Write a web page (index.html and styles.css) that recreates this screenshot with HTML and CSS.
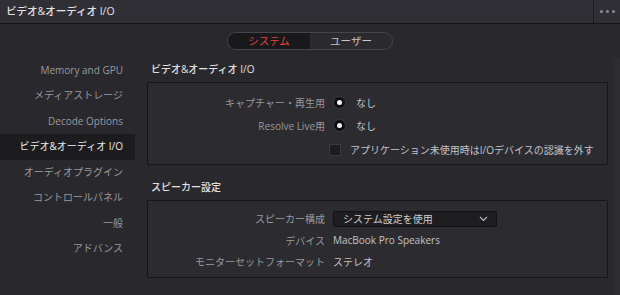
FILE: index.html
```html
<!DOCTYPE html>
<html lang="ja">
<head>
  <meta charset="UTF-8">
  <title>ビデオ&amp;オーディオ I/O</title>
  <link rel="stylesheet" href="styles.css">
</head>
<body>

  <!-- Window title -->
  <div class="titlebar">
    <div class="title">ビデオ&amp;オーディオ I/O</div>
    <div class="more"><span></span><span></span><span></span></div>
  </div>

  <!-- System / User switch -->
  <div class="tabs">
    <div class="segmented">
      <div class="seg active">システム</div>
      <div class="seg">ユーザー</div>
    </div>
  </div>

  <div class="main">
    <ul class="sidebar">
      <li>Memory and GPU</li>
      <li>メディアストレージ</li>
      <li>Decode Options</li>
      <li class="current">ビデオ&amp;オーディオ I/O</li>
      <li>オーディオプラグイン</li>
      <li>コントロールパネル</li>
      <li>一般</li>
      <li>アドバンス</li>
    </ul>

    <div class="content">
      <div class="section-title first">ビデオ&amp;オーディオ I/O</div>
      <div class="panel io">
        <div class="row">
          <div class="label">キャプチャー・再生用</div>
          <div class="value"><span class="radio"></span>なし</div>
        </div>
        <div class="row">
          <div class="label">Resolve Live用</div>
          <div class="value"><span class="radio"></span>なし</div>
        </div>
        <div class="row">
          <div class="label"></div>
          <div class="value"><span class="checkbox"></span>アプリケーション未使用時はI/Oデバイスの認識を外す</div>
        </div>
      </div>

      <div class="section-title">スピーカー設定</div>
      <div class="panel speaker">
        <div class="row">
          <div class="label">スピーカー構成</div>
          <div class="value">
            <div class="dropdown">
              <span>システム設定を使用</span>
              <svg width="9" height="6" viewBox="0 0 9 6"><path d="M1 1 L4.5 4.5 L8 1" fill="none" stroke="#b8b8bc" stroke-width="1.2"/></svg>
            </div>
          </div>
        </div>
        <div class="row">
          <div class="label">デバイス</div>
          <div class="value">MacBook Pro Speakers</div>
        </div>
        <div class="row">
          <div class="label">モニターセットフォーマット</div>
          <div class="value">ステレオ</div>
        </div>
      </div>
    </div>

    <div class="scroll"></div>
  </div>

</body>
</html>
```

FILE: styles.css
```css
body {
  margin: 0;
  width: 620px;
  height: 295px;
  overflow: hidden;
  background: #28282d;
  font-family: "Open Sans", "Noto Sans CJK JP", sans-serif;
  font-size: 10px;
  color: #9c9ca0;
}
.titlebar {
  height: 23px;
  display: flex;
  background: #2f2f35;
  border-bottom: 1px solid #161618;
}
.title {
  flex: 1;
  padding-left: 6px;
  line-height: 23px;
  font-size: 10.5px;
  color: #e4e4e6;
  font-weight: 500;
}
.more {
  width: 26px;
  border-left: 1px solid #1c1c1f;
  display: flex;
  align-items: center;
  justify-content: center;
  gap: 3px;
}
.more span {
  width: 3px;
  height: 3px;
  border-radius: 50%;
  background: #8a8a90;
}
.tabs {
  display: flex;
  justify-content: center;
  padding-top: 8px;
}
.segmented {
  display: flex;
  height: 16px;
  border: 1px solid #45454b;
  border-radius: 9px;
  overflow: hidden;
  background: #2a2a2f;
}
.seg {
  width: 82px;
  text-align: center;
  line-height: 16px;
  font-size: 10.5px;
  color: #c8c8cc;
}
.seg.active {
  background: #19191c;
  color: #e0463e;
}
.main {
  display: flex;
  margin-top: 7.5px;
}
.sidebar {
  list-style: none;
  margin: 0;
  padding: 0;
  width: 135px;
  flex: none;
}
.sidebar li {
  height: 25.5px;
  line-height: 25.5px;
  text-align: right;
  padding-right: 12px;
  color: #9a9a9e;
}
.sidebar li.current {
  background: #1c1c1f;
  color: #ececee;
}
.content {
  width: 461px;
  margin-left: 12px;
  flex: none;
}
.section-title {
  color: #e2e2e4;
  font-weight: 500;
  padding-left: 4px;
  height: 25px;
  line-height: 25px;
  padding-top: 10px;
}
.section-title.first {
  padding-top: 0;
  height: 24.5px;
  line-height: 23px;
}
.panel {
  background: #2b2b30;
  border: 1px solid #161618;
  border-radius: 2px;
}
.panel.io {
  height: 83px;
  padding-top: 8px;
  box-sizing: border-box;
}
.panel.speaker {
  height: 78px;
  box-sizing: border-box;
  padding-top: 7px;
}
.row {
  display: grid;
  grid-template-columns: 177px 1fr;
  column-gap: 8px;
  align-items: center;
}
.io .row {
  height: 23px;
}
.io .row:last-child {
  height: 25px;
}
.speaker .row {
  height: 21.5px;
}
.label {
  text-align: right;
  color: #9a9a9e;
}
.value {
  display: flex;
  align-items: center;
  color: #c4c4c8;
  white-space: nowrap;
}
.radio {
  width: 13px;
  height: 13px;
  box-sizing: border-box;
  border-radius: 50%;
  background: #0e0e10;
  border: 1px solid #3a3a3f;
  margin-right: 10px;
  position: relative;
}
.radio::after {
  content: "";
  position: absolute;
  left: 3px;
  top: 3px;
  width: 5px;
  height: 5px;
  border-radius: 50%;
  background: #f4f4f6;
}
.checkbox {
  width: 12px;
  height: 12px;
  box-sizing: border-box;
  background: #1d1d20;
  border: 1px solid #3a3a3f;
  border-radius: 1px;
  margin-left: -4px;
  margin-right: 9px;
}
.dropdown {
  width: 164px;
  height: 16px;
  box-sizing: border-box;
  display: flex;
  align-items: center;
  justify-content: space-between;
  padding: 0 8px 0 9px;
  background: #1e1e21;
  border: 1px solid #131315;
  border-radius: 2px;
  color: #cfcfd2;
}
.scroll {
  margin-left: 5px;
  width: 7px;
  height: 240px;
  background: #2c2c31;
}
```
